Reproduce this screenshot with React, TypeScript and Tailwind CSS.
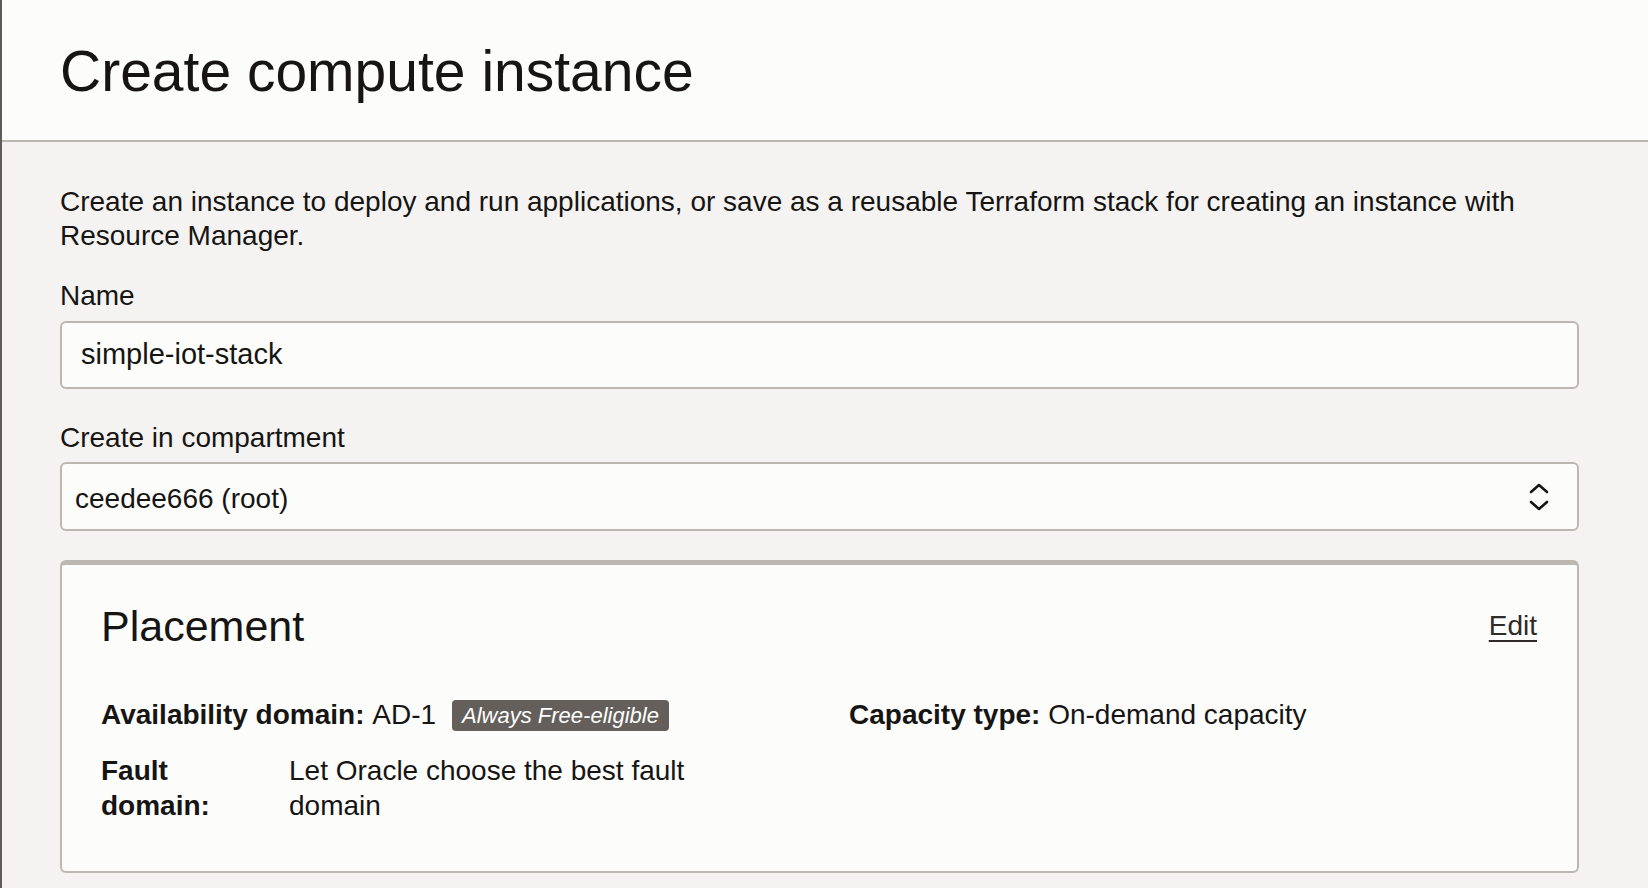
import React from "react";

function Chevrons() {
  return (
    <svg width="22" height="32" viewBox="0 0 22 32" fill="none">
      <path d="M3 11 L11 4 L19 11" stroke="#161513" strokeWidth="2.6" strokeLinecap="round" strokeLinejoin="round" />
      <path d="M3 21 L11 28 L19 21" stroke="#161513" strokeWidth="2.6" strokeLinecap="round" strokeLinejoin="round" />
    </svg>
  );
}

export default function App() {
  return (
    <div
      className="w-full h-[888px] overflow-hidden bg-[#f4f3f1] border-l-2 border-[#5e5b58] text-[#161513]"
      style={{ fontFamily: '"Liberation Sans", Arial, sans-serif' }}
    >
      <header className="h-[142px] bg-[#fcfcfb] border-b-2 border-[#bcb7b1] pl-[58px] flex items-center">
        <h1 className="text-[57px] leading-[64px] font-normal pt-[2px]">Create compute instance</h1>
      </header>

      <main className="pl-[58px] pr-[69px] pt-[43px]">
        <p className="text-[28px] leading-[34px]">
          Create an instance to deploy and run applications, or save as a reusable Terraform stack for creating an instance with Resource Manager.
        </p>

        <label className="block mt-[26px] text-[28px] leading-[34px]">Name</label>
        <div className="mt-[8px] h-[68px] rounded-[6px] border-2 border-[#bcb7b1] bg-[#fcfcfb] flex items-center pl-[19px] text-[29px]">
          simple-iot-stack
        </div>

        <label className="block mt-[32px] text-[28px] leading-[34px]">Create in compartment</label>
        <div className="mt-[7px] h-[69px] rounded-[6px] border-2 border-[#bcb7b1] bg-[#fcfcfb] flex items-center justify-between pl-[13px] pr-[27px] text-[28px]">
          <span className="pt-[5px]">ceedee666 (root)</span>
          <Chevrons />
        </div>

        <section className="mt-[29px] h-[313px] rounded-[6px] border-2 border-t-[5px] border-[#bcb7b1] bg-[#fcfcfb] pl-[39px] pr-[40px] pt-[36px]">
          <div className="flex items-center justify-between h-[50px]">
            <h2 className="text-[43px] leading-[50px] font-normal">Placement</h2>
            <a className="text-[28px] leading-[34px] underline underline-offset-[5px] decoration-[2px] text-[#2f2b28]">Edit</a>
          </div>

          <div className="flex mt-[47px]">
            <div className="w-[748px]">
              <div className="flex items-center h-[34px] text-[28px] leading-[34px]">
                <span className="font-bold">Availability domain:</span>
                <span>&nbsp;AD-1</span>
                <span className="ml-[16px] h-[31px] px-[10px] rounded-[4px] bg-[#655f5b] text-white italic text-[22px] leading-[31px]">
                  Always Free-eligible
                </span>
              </div>
              <div className="flex mt-[21px] text-[28px] leading-[35px]">
                <div className="w-[188px] shrink-0 pr-[30px] font-bold">Fault domain:</div>
                <div className="w-[430px]">Let Oracle choose the best fault domain</div>
              </div>
            </div>
            <div className="text-[28px] leading-[34px]">
              <span className="font-bold">Capacity type:</span> On-demand capacity
            </div>
          </div>
        </section>
      </main>
    </div>
  );
}
